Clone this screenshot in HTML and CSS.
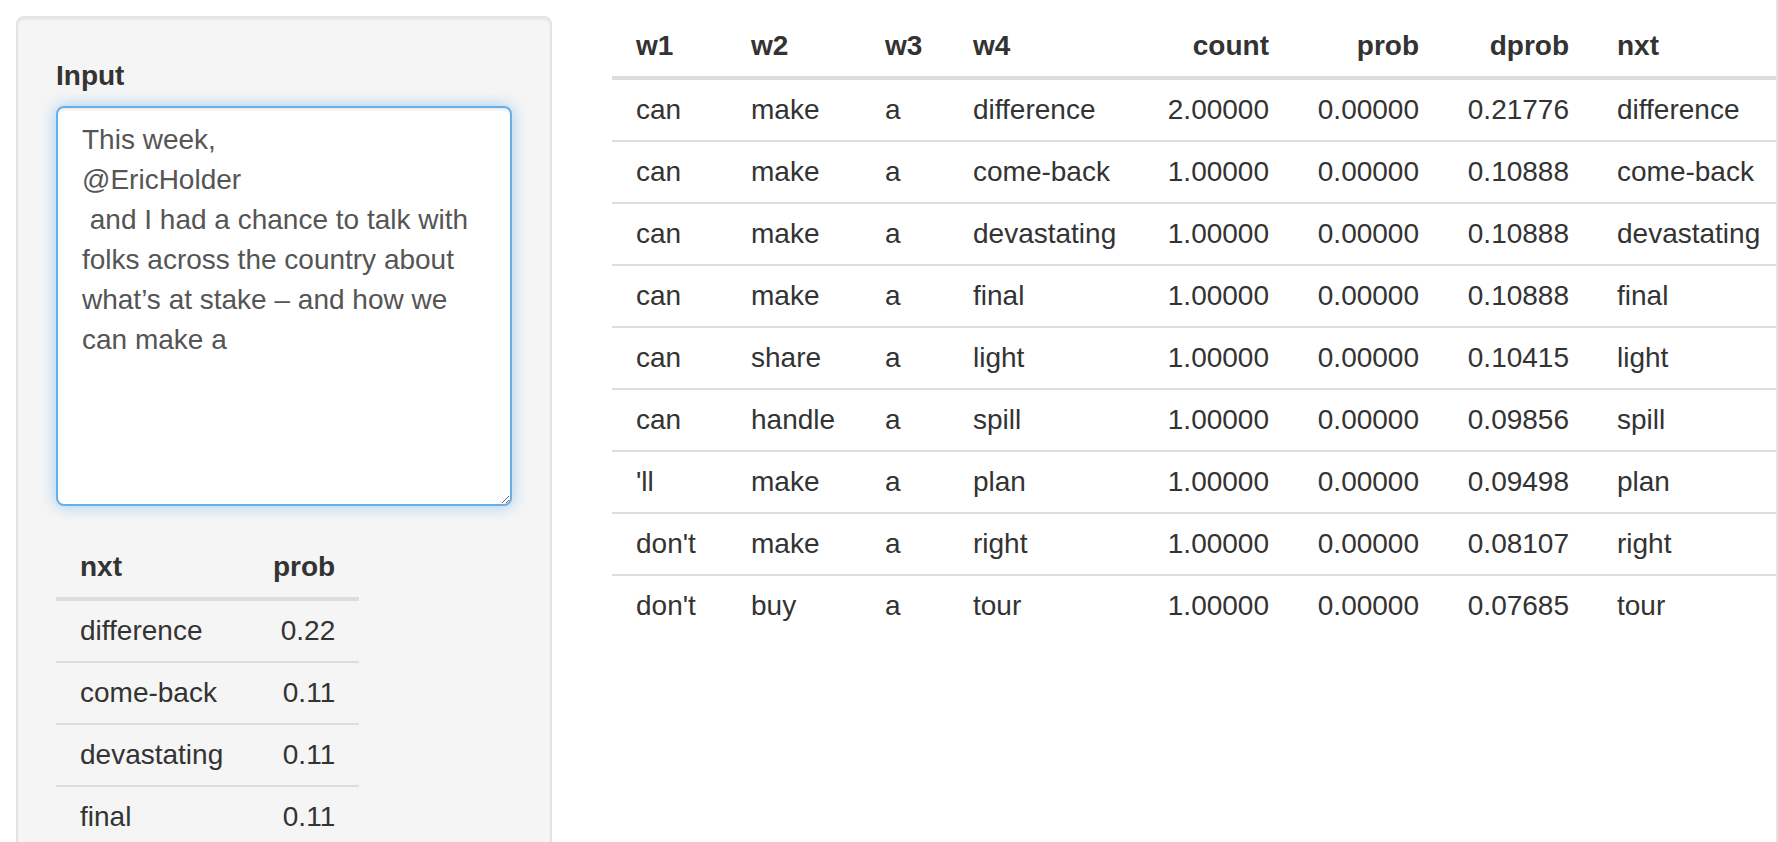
FILE: index.html
```html
<!DOCTYPE html>
<html lang="en">
<head>
<meta charset="utf-8">
<title>Next word prediction</title>
<link rel="stylesheet" href="styles.css">
</head>
<body>
<div class="page">
  <div class="sidebar">
    <div class="well">
      <div class="form-group">
        <label class="control-label" for="text">Input</label>
        <textarea id="text" class="form-control focused">This week,
@EricHolder
 and I had a chance to talk with folks across the country about what’s at stake – and how we can make a</textarea>
      </div>
      <table class="data small-table">
        <thead>
          <tr><th class="c-word">nxt</th><th class="c-prob num">prob</th></tr>
        </thead>
        <tbody>
          <tr><td>difference</td><td class="num">0.22</td></tr>
          <tr><td>come-back</td><td class="num">0.11</td></tr>
          <tr><td>devastating</td><td class="num">0.11</td></tr>
          <tr><td>final</td><td class="num">0.11</td></tr>
        </tbody>
      </table>
    </div>
  </div>
  <div class="main">
    <table class="data big-table">
      <thead>
        <tr>
          <th class="c-w1">w1</th>
          <th class="c-w2">w2</th>
          <th class="c-w3">w3</th>
          <th class="c-w4">w4</th>
          <th class="c-num num">count</th>
          <th class="c-num num">prob</th>
          <th class="c-num num">dprob</th>
          <th class="c-nxt">nxt</th>
        </tr>
      </thead>
      <tbody>
        <tr><td>can</td><td>make</td><td>a</td><td>difference</td><td class="num">2.00000</td><td class="num">0.00000</td><td class="num">0.21776</td><td>difference</td></tr>
        <tr><td>can</td><td>make</td><td>a</td><td>come-back</td><td class="num">1.00000</td><td class="num">0.00000</td><td class="num">0.10888</td><td>come-back</td></tr>
        <tr><td>can</td><td>make</td><td>a</td><td>devastating</td><td class="num">1.00000</td><td class="num">0.00000</td><td class="num">0.10888</td><td>devastating</td></tr>
        <tr><td>can</td><td>make</td><td>a</td><td>final</td><td class="num">1.00000</td><td class="num">0.00000</td><td class="num">0.10888</td><td>final</td></tr>
        <tr><td>can</td><td>share</td><td>a</td><td>light</td><td class="num">1.00000</td><td class="num">0.00000</td><td class="num">0.10415</td><td>light</td></tr>
        <tr><td>can</td><td>handle</td><td>a</td><td>spill</td><td class="num">1.00000</td><td class="num">0.00000</td><td class="num">0.09856</td><td>spill</td></tr>
        <tr><td>'ll</td><td>make</td><td>a</td><td>plan</td><td class="num">1.00000</td><td class="num">0.00000</td><td class="num">0.09498</td><td>plan</td></tr>
        <tr><td>don't</td><td>make</td><td>a</td><td>right</td><td class="num">1.00000</td><td class="num">0.00000</td><td class="num">0.08107</td><td>right</td></tr>
        <tr><td>don't</td><td>buy</td><td>a</td><td>tour</td><td class="num">1.00000</td><td class="num">0.00000</td><td class="num">0.07685</td><td>tour</td></tr>
      </tbody>
    </table>
  </div>
</div>
</body>
</html>
```
FILE: styles.css
```css
* {
  box-sizing: border-box;
}

html, body {
  margin: 0;
  padding: 0;
  height: 100%;
  overflow: hidden;
  background: #fff;
}

body {
  font-family: "Liberation Sans", Arial, Helvetica, sans-serif;
  font-size: 28px;
  line-height: 40px;
  color: #333;
}

.page {
  display: flex;
  height: 100vh;
}

.sidebar {
  flex: 0 0 552px;
  padding: 16px 0 0 16px;
}

.well {
  background: #f5f5f5;
  border: 2px solid #e3e3e3;
  border-radius: 8px;
  box-shadow: inset 0 2px 2px rgba(0, 0, 0, 0.05);
  padding: 38px;
  min-height: 1000px;
}

.form-group {
  margin-bottom: 31px;
}

.control-label {
  display: block;
  font-weight: bold;
  margin-bottom: 10px;
}

.form-control {
  display: block;
  width: 100%;
  height: 400px;
  padding: 12px 24px;
  font-family: inherit;
  font-size: 28px;
  line-height: 40px;
  color: #555;
  background: #fff;
  border: 2px solid #ccc;
  border-radius: 8px;
  resize: both;
  overflow: hidden;
  outline: none;
  box-shadow: inset 0 2px 2px rgba(0, 0, 0, 0.075);
}

.form-control.focused {
  border-color: #66afe9;
  box-shadow: inset 0 2px 2px rgba(0, 0, 0, 0.075), 0 0 16px rgba(102, 175, 233, 0.6);
}

.main {
  flex: 1 1 auto;
  margin-left: 60px;
  padding-top: 16px;
  overflow: hidden;
  border-right: 2px solid #e4e4e4;
}

table.data {
  border-collapse: collapse;
  border-spacing: 0;
}

table.data th,
table.data td {
  padding: 10px 24px;
  text-align: left;
  vertical-align: top;
  white-space: nowrap;
}

table.data th {
  font-weight: bold;
  border-bottom: 4px solid #ddd;
}

table.data td {
  border-top: 2px solid #ddd;
}

table.data .num {
  text-align: right;
}

.small-table .c-word { width: 193px; }
.small-table .c-prob { width: 110px; }

.big-table {
  table-layout: fixed;
  width: 1170px;
}

.big-table .c-w1 { width: 115px; }
.big-table .c-w2 { width: 134px; }
.big-table .c-w3 { width: 88px; }
.big-table .c-w4 { width: 194px; }
.big-table .c-num { width: 150px; }
.big-table .c-nxt { width: 189px; }
```
